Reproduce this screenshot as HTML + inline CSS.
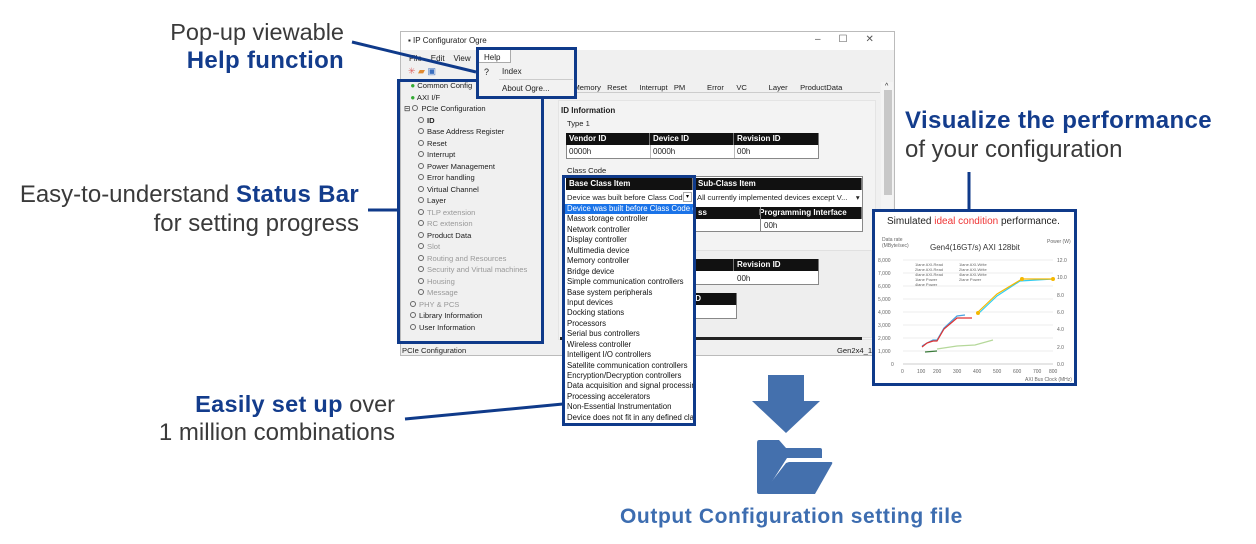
<!DOCTYPE html>
<html><head><meta charset="utf-8"><style>
*{margin:0;padding:0;box-sizing:border-box}
body{width:1256px;height:544px;background:#fff;position:relative;overflow:hidden;font-family:"Liberation Sans",sans-serif}
.a{position:absolute;white-space:nowrap}
.cap{font-size:24px;color:#3a3a3a}
.cap b{color:#133c8c;letter-spacing:0.3px}
.s{font-size:8px;color:#222}
.blk{background:#111;color:#fff;font-weight:bold;font-size:8px;padding-left:3px;line-height:12px;border-right:1px solid #777}
.bx{position:absolute;border:3px solid #0f3a8a}
.tree div{height:11.5px;font-size:7.6px;color:#222;line-height:11.5px}
.tree .g{color:#999}
.tree span.o{display:inline-block;width:6px;height:6px;border:1px solid #666;border-radius:50%;margin-right:3px;vertical-align:0}
.lst div{height:10.45px;line-height:10.45px;font-size:7.8px;color:#111;padding-left:2px;overflow:hidden}
</style></head><body>

<!-- captions -->
<div class="a cap" style="right:912px;top:19px;font-size:23.5px">Pop-up viewable</div>
<div class="a cap" style="right:912px;top:47px"><b>Help function</b></div>
<div class="a cap" style="right:897px;top:181px">Easy-to-understand <b>Status Bar</b></div>
<div class="a cap" style="right:897px;top:210px">for setting progress</div>
<div class="a cap" style="right:861px;top:391px;font-size:23.5px"><b>Easily set up</b> over</div>
<div class="a cap" style="right:861px;top:419px">1 million combinations</div>
<div class="a cap" style="left:905px;top:107px"><b style="letter-spacing:0.4px">Visualize the performance</b></div>
<div class="a cap" style="left:905px;top:136px">of your configuration</div>
<div class="a" style="left:620px;top:505px;font-size:21px;font-weight:bold;color:#3d6db0;letter-spacing:0.6px">Output Configuration setting file</div>

<!-- window -->
<div class="a" style="left:400px;top:31px;width:495px;height:325px;background:#f0f0f0;border:1px solid #bbb"></div>
<div class="a" style="left:401px;top:32px;width:493px;height:18px;background:#fff"></div>
<div class="a s" style="left:408px;top:36px;font-size:8px">▪ IP Configurator Ogre</div>
<div class="a" style="left:815px;top:34px;font-size:10px;color:#555;letter-spacing:18px">–☐✕</div>
<div class="a s" style="left:409px;top:54px">File&nbsp;&nbsp;&nbsp;&nbsp;Edit&nbsp;&nbsp;&nbsp;&nbsp;View</div>
<div class="a" style="left:408px;top:66px;font-size:9px;color:#d66">✳ <span style="color:#e08a30">▰</span> <span style="color:#3a6fc0">▣</span></div>
<div class="a" style="left:401px;top:79px;width:154px;height:265px;background:#f0f0f0"></div>
<div class="a" style="left:555px;top:80px;width:325px;height:13px;background:#f0f0f0;border-bottom:1px solid #ccc"></div>
<div class="a s" style="left:563px;top:83px;font-size:7.6px;word-spacing:1px">g&nbsp;&nbsp;Memory&nbsp;&nbsp;Reset&nbsp;&nbsp;&nbsp;&nbsp;Interrupt&nbsp;&nbsp;PM&nbsp;&nbsp;&nbsp;&nbsp;&nbsp;&nbsp;&nbsp;Error&nbsp;&nbsp;&nbsp;&nbsp;VC&nbsp;&nbsp;&nbsp;&nbsp;&nbsp;&nbsp;&nbsp;Layer&nbsp;&nbsp;&nbsp;&nbsp;ProductData</div>
<div class="a" style="left:881px;top:82px;width:12px;height:258px;background:#f4f4f4"></div>
<div class="a" style="left:884px;top:90px;width:8px;height:105px;background:#c8c8c8"></div>
<div class="a s" style="left:885px;top:83px;font-size:7px">^</div>
<div class="a s" style="left:402px;top:346px;font-size:7.6px">PCIe Configuration</div>
<div class="a s" style="left:837px;top:346px;font-size:7.6px">Gen2x4_12</div>

<!-- content panel -->
<div class="a" style="left:558px;top:100px;width:318px;height:240px;background:#f3f3f3;border:1px solid #e4e4e4"></div>
<div class="a s" style="left:561px;top:106px;font-weight:bold;font-size:8px">ID Information</div>
<div class="a s" style="left:567px;top:119px;font-size:7.6px">Type 1</div>
<div class="a" style="left:566px;top:133px;width:253px;height:26px;border:1px solid #888;background:#fff"></div>
<div class="a blk" style="left:566px;top:133px;width:84px">Vendor ID</div>
<div class="a blk" style="left:650px;top:133px;width:84px">Device ID</div>
<div class="a blk" style="left:734px;top:133px;width:85px">Revision ID</div>
<div class="a s" style="left:569px;top:147px">0000h</div>
<div class="a s" style="left:653px;top:147px">0000h</div>
<div class="a s" style="left:737px;top:147px">00h</div>
<div class="a" style="left:650px;top:145px;width:1px;height:13px;background:#bbb"></div>
<div class="a" style="left:734px;top:145px;width:1px;height:13px;background:#bbb"></div>
<div class="a s" style="left:567px;top:166px;font-size:7.6px">Class Code</div>
<div class="a" style="left:563px;top:176px;width:300px;height:56px;border:1px solid #888;background:#fff"></div>
<div class="a blk" style="left:695px;top:178px;width:167px">Sub-Class Item</div>
<div class="a s" style="left:697px;top:193px;font-size:7.6px">All currently implemented devices except V...&nbsp;&nbsp;&nbsp;&nbsp;▾</div>
<div class="a blk" style="left:695px;top:207px;width:167px">ss <span style="margin-left:50px">Programming Interface</span></div>
<div class="a s" style="left:764px;top:221px">00h</div>
<div class="a" style="left:760px;top:207px;width:1px;height:24px;background:#888"></div>
<div class="a" style="left:562px;top:250px;width:310px;height:88px;background:#eee;border:1px solid #e0e0e0"></div>
<div class="a" style="left:690px;top:259px;width:129px;height:26px;border:1px solid #888;background:#fff"></div>
<div class="a blk" style="left:690px;top:259px;width:44px">&nbsp;</div>
<div class="a blk" style="left:734px;top:259px;width:85px">Revision ID</div>
<div class="a s" style="left:737px;top:274px">00h</div>
<div class="a" style="left:690px;top:293px;width:47px;height:26px;border:1px solid #888;background:#fff"></div>
<div class="a blk" style="left:690px;top:293px;width:47px">ID</div>
<div class="a" style="left:560px;top:337px;width:302px;height:3px;background:#222"></div>

<!-- tree -->
<div class="a tree" style="left:404px;top:80px;width:136px">
<div>&nbsp;&nbsp;&nbsp;<span style="color:#3a3;font-size:8px">●</span> Common Config</div>
<div>&nbsp;&nbsp;&nbsp;<span style="color:#3a3;font-size:8px">●</span> AXI I/F</div>
<div>⊟ <span class="o"></span>PCIe Configuration</div>
<div style="padding-left:14px"><span class="o"></span><b>ID</b></div>
<div style="padding-left:14px"><span class="o"></span>Base Address Register</div>
<div style="padding-left:14px"><span class="o"></span>Reset</div>
<div style="padding-left:14px"><span class="o"></span>Interrupt</div>
<div style="padding-left:14px"><span class="o"></span>Power Management</div>
<div style="padding-left:14px"><span class="o"></span>Error handling</div>
<div style="padding-left:14px"><span class="o"></span>Virtual Channel</div>
<div style="padding-left:14px"><span class="o"></span>Layer</div>
<div class="g" style="padding-left:14px"><span class="o"></span>TLP extension</div>
<div class="g" style="padding-left:14px"><span class="o"></span>RC extension</div>
<div style="padding-left:14px"><span class="o"></span>Product Data</div>
<div class="g" style="padding-left:14px"><span class="o"></span>Slot</div>
<div class="g" style="padding-left:14px"><span class="o"></span>Routing and Resources</div>
<div class="g" style="padding-left:14px"><span class="o"></span>Security and Virtual machines</div>
<div class="g" style="padding-left:14px"><span class="o"></span>Housing</div>
<div class="g" style="padding-left:14px"><span class="o"></span>Message</div>
<div class="g" style="padding-left:6px"><span class="o"></span>PHY &amp; PCS</div>
<div style="padding-left:6px"><span class="o"></span>Library Information</div>
<div style="padding-left:6px"><span class="o"></span>User Information</div>
</div>
<div class="bx" style="left:397px;top:79px;width:147px;height:265px"></div>

<!-- help popup -->
<div class="a" style="left:478px;top:49px;width:98px;height:49px;background:#f2f2f2"></div>
<div class="a" style="left:478px;top:49px;width:33px;height:14px;background:#fff;border:1px solid #aaa"></div>
<div class="a s" style="left:484px;top:53px">Help</div>
<div class="a s" style="left:484px;top:67px;font-size:9px">?</div>
<div class="a s" style="left:502px;top:67px">Index</div>
<div class="a" style="left:499px;top:79px;width:74px;height:1px;background:#ccc"></div>
<div class="a s" style="left:502px;top:84px">About Ogre...</div>
<div class="bx" style="left:476px;top:47px;width:101px;height:52px"></div>

<!-- dropdown -->
<div class="a" style="left:564px;top:176px;width:130px;height:250px;background:#fff"></div>
<div class="a blk" style="left:566px;top:178px;width:127px">Base Class Item</div>
<div class="a s" style="left:567px;top:193px;font-size:7.6px">Device was built before Class Cod</div>
<div class="a" style="left:683px;top:192px;width:9px;height:10px;border:1px solid #aaa;font-size:6px;text-align:center;line-height:8px">▾</div>
<div class="a lst" style="left:565px;top:204px;width:128px">
<div style="background:#1a73e8;color:#fff">Device was built before Class Code d</div>
<div>Mass storage controller</div><div>Network controller</div><div>Display controller</div><div>Multimedia device</div><div>Memory controller</div><div>Bridge device</div><div>Simple communication controllers</div><div>Base system peripherals</div><div>Input devices</div><div>Docking stations</div><div>Processors</div><div>Serial bus controllers</div><div>Wireless controller</div><div>Intelligent I/O controllers</div><div>Satellite communication controllers</div><div>Encryption/Decryption controllers</div><div>Data acquisition and signal processing</div><div>Processing accelerators</div><div>Non-Essential Instrumentation</div><div>Device does not fit in any defined class</div>
</div>
<div class="bx" style="left:562px;top:175px;width:134px;height:251px"></div>

<!-- lines -->
<svg class="a" style="left:0;top:0" width="1256" height="544">
<g stroke="#0f3a8a" stroke-width="3" fill="none">
<line x1="352" y1="42" x2="476" y2="72"/>
<line x1="368" y1="210" x2="397" y2="210"/>
<line x1="405" y1="419" x2="563" y2="404"/>
<line x1="969" y1="172" x2="969" y2="210"/>
</g>
<path d="M768 375 H804 V401 H820 L786 433 L752 401 H768 Z" fill="#4470ad"/>
<path d="M759 440 Q757 440 757 443 V492 Q757 494 759 494 H764 L787 458 H822 V450 Q822 448 820 448 H786 L779 440 Z" fill="#4470ad"/>
<path d="M789 462 H831 Q833 462 832 464 L815 494 H762 L786 463 Z" fill="#4470ad"/>
</svg>

<!-- chart -->
<div class="a" style="left:872px;top:209px;width:205px;height:177px;background:#fff;border:3px solid #0f3a8a"></div>
<div class="a" style="left:887px;top:216px;font-size:10px;color:#222">Simulated <span style="color:#e33">ideal condition</span> performance.</div>
<svg class="a" style="left:875px;top:236px" width="199" height="148" font-family="Liberation Sans" font-size="5" fill="#666">
<text x="7" y="5">Data rate</text><text x="7" y="11">(MByte/sec)</text>
<text x="172" y="7">Power (W)</text>
<text x="55" y="14" font-size="8" fill="#333">Gen4(16GT/s) AXI 128bit</text>
<g stroke="#ddd" stroke-width="0.5">
<line x1="28" y1="24" x2="178" y2="24"/><line x1="28" y1="37" x2="178" y2="37"/><line x1="28" y1="50" x2="178" y2="50"/><line x1="28" y1="63" x2="178" y2="63"/><line x1="28" y1="76" x2="178" y2="76"/><line x1="28" y1="89" x2="178" y2="89"/><line x1="28" y1="102" x2="178" y2="102"/><line x1="28" y1="115" x2="178" y2="115"/>
<line x1="28" y1="128" x2="178" y2="128" stroke="#999"/>
</g>
<g><text x="3" y="26">8,000</text><text x="3" y="39">7,000</text><text x="3" y="52">6,000</text><text x="3" y="65">5,000</text><text x="3" y="78">4,000</text><text x="3" y="91">3,000</text><text x="3" y="104">2,000</text><text x="3" y="117">1,000</text><text x="16" y="130">0</text>
<text x="182" y="26">12.0</text><text x="182" y="43">10.0</text><text x="182" y="61">8.0</text><text x="182" y="78">6.0</text><text x="182" y="95">4.0</text><text x="182" y="113">2.0</text><text x="182" y="130">0.0</text>
<text x="26" y="137">0</text><text x="42" y="137">100</text><text x="58" y="137">200</text><text x="78" y="137">300</text><text x="98" y="137">400</text><text x="118" y="137">500</text><text x="138" y="137">600</text><text x="158" y="137">700</text><text x="174" y="137">800</text>
<text x="150" y="145">AXI Bus Clock (MHz)</text></g>
<g font-size="4"><text x="40" y="30">1lane AXI-Read</text><text x="84" y="30">1lane AXI-Write</text><text x="40" y="35">2lane AXI-Read</text><text x="84" y="35">2lane AXI-Write</text><text x="40" y="40">4lane AXI-Read</text><text x="84" y="40">4lane AXI-Write</text><text x="40" y="45">1lane Power</text><text x="84" y="45">2lane Power</text><text x="40" y="50">4lane Power</text></g>
<g fill="none" stroke-width="1.2">
<polyline points="47,110 52,107 58,104 62,104 69,92 82,80 90,79" stroke="#4aa3df"/>
<polyline points="47,111 52,107 58,105 62,105 69,93 82,82 97,82" stroke="#e03030"/>
<polyline points="103,78 122,60 145,45 178,43" stroke="#33ccee"/>
<polyline points="103,76 122,58 147,43 178,43" stroke="#f5b800"/>
<polyline points="50,116 62,115" stroke="#3a7a3a"/>
<polyline points="62,113 82,110 100,109 118,104" stroke="#b5d89a"/>
</g>
<circle cx="103" cy="77" r="2" fill="#f5b800"/><circle cx="147" cy="43" r="2" fill="#f5b800"/><circle cx="178" cy="43" r="2" fill="#f5b800"/>
</svg>

</body></html>
